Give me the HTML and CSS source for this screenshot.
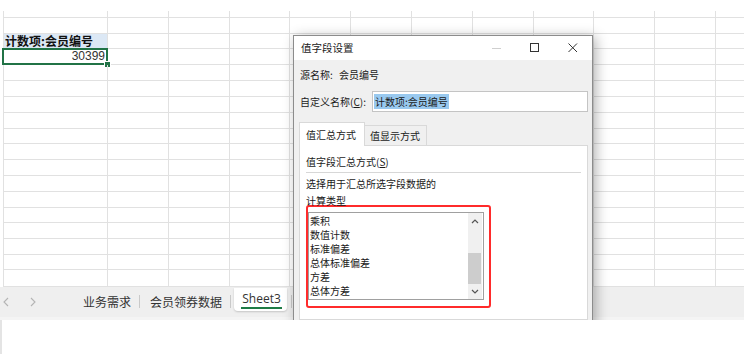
FILE: index.html
```html
<!DOCTYPE html>
<html lang="zh-CN">
<head>
    <meta charset="UTF-8">
    <link rel="stylesheet" href="styles.css">
    <title>值字段设置</title>
</head>
<body>
<div class="screen">
    <div class="sheet">
        <div class="row r7"><span></span><span></span><span></span><span></span><span></span><span></span><span></span><span></span><span></span><span></span><span></span><span></span></div>
        <div class="row"><span></span><span></span><span></span><span></span><span></span><span></span><span></span><span></span><span></span><span></span><span></span><span></span></div>
        <div class="row r15"><span class="head">计数项:会员编号</span><span></span><span></span><span></span><span></span><span></span><span></span><span></span><span></span><span></span><span></span><span></span></div>
        <div class="row"><span class="num">30399<i class="sel"><b class="handle"></b></i></span><span></span><span></span><span></span><span></span><span></span><span></span><span></span><span></span><span></span><span></span><span></span></div>
        <div class="row"><span></span><span></span><span></span><span></span><span></span><span></span><span></span><span></span><span></span><span></span><span></span><span></span></div>
        <div class="row"><span></span><span></span><span></span><span></span><span></span><span></span><span></span><span></span><span></span><span></span><span></span><span></span></div>
        <div class="row"><span></span><span></span><span></span><span></span><span></span><span></span><span></span><span></span><span></span><span></span><span></span><span></span></div>
        <div class="row"><span></span><span></span><span></span><span></span><span></span><span></span><span></span><span></span><span></span><span></span><span></span><span></span></div>
        <div class="row r15"><span></span><span></span><span></span><span></span><span></span><span></span><span></span><span></span><span></span><span></span><span></span><span></span></div>
        <div class="row"><span></span><span></span><span></span><span></span><span></span><span></span><span></span><span></span><span></span><span></span><span></span><span></span></div>
        <div class="row"><span></span><span></span><span></span><span></span><span></span><span></span><span></span><span></span><span></span><span></span><span></span><span></span></div>
        <div class="row"><span></span><span></span><span></span><span></span><span></span><span></span><span></span><span></span><span></span><span></span><span></span><span></span></div>
        <div class="row"><span></span><span></span><span></span><span></span><span></span><span></span><span></span><span></span><span></span><span></span><span></span><span></span></div>
        <div class="row r15"><span></span><span></span><span></span><span></span><span></span><span></span><span></span><span></span><span></span><span></span><span></span><span></span></div>
        <div class="row"><span></span><span></span><span></span><span></span><span></span><span></span><span></span><span></span><span></span><span></span><span></span><span></span></div>
        <div class="row"><span></span><span></span><span></span><span></span><span></span><span></span><span></span><span></span><span></span><span></span><span></span><span></span></div>
        <div class="row r15"><span></span><span></span><span></span><span></span><span></span><span></span><span></span><span></span><span></span><span></span><span></span><span></span></div>
        <div class="row r17"><span></span><span></span><span></span><span></span><span></span><span></span><span></span><span></span><span></span><span></span><span></span><span></span></div>
    </div>

    <div class="tabbar">
        <div class="nav">
            <svg width="8" height="10" viewBox="0 0 8 10"><path d="M6 1 L2 5 L6 9" fill="none" stroke="#b4b4b4" stroke-width="1.1"/></svg>
            <svg width="8" height="10" viewBox="0 0 8 10"><path d="M2 1 L6 5 L2 9" fill="none" stroke="#b4b4b4" stroke-width="1.1"/></svg>
        </div>
        <div class="stab">业务需求</div>
        <span class="sep"></span>
        <div class="stab">会员领券数据</div>
        <span class="sep"></span>
        <div class="stab active"><span>Sheet3</span></div>
        <span class="sep"></span>
    </div>

    <div class="dialog">
        <div class="titlebar">
            <div class="title">值字段设置</div>
            <div class="btn">
                <svg width="10" height="10" viewBox="0 0 10 10"><path d="M0 5.5 H9" stroke="#cfcfcf" stroke-width="1"/></svg>
            </div>
            <div class="btn">
                <svg width="10" height="10" viewBox="0 0 10 10"><rect x="0.5" y="0.5" width="8" height="8" fill="none" stroke="#333" stroke-width="1"/></svg>
            </div>
            <div class="btn">
                <svg width="10" height="10" viewBox="0 0 10 10"><path d="M0.5 0.5 L9 9 M9 0.5 L0.5 9" stroke="#333" stroke-width="1"/></svg>
            </div>
        </div>
        <div class="body">
            <div class="line src"><span class="lbl">源名称:</span>会员编号</div>
            <div class="line custom">
                <span class="lbl">自定义名称(<u>C</u>):</span>
                <div class="input"><span class="picked">计数项:会员编号</span></div>
            </div>
            <div class="tabs">
                <div class="tab on">值汇总方式</div>
                <div class="tab">值显示方式</div>
            </div>
            <div class="panel">
                <div class="caption">值字段汇总方式(<u>S</u>)</div>
                <div class="rule"></div>
                <p class="hint">选择用于汇总所选字段数据的<br>计算类型</p>
                <div class="mark">
                    <div class="list">
                        <ul class="items">
                            <li>乘积</li>
                            <li>数值计数</li>
                            <li>标准偏差</li>
                            <li>总体标准偏差</li>
                            <li>方差</li>
                            <li>总体方差</li>
                        </ul>
                        <div class="scroll">
                            <div class="arrow up">
                                <svg width="8" height="5" viewBox="0 0 8 5"><path d="M1 4 L4 1 L7 4" fill="none" stroke="#555" stroke-width="1.2"/></svg>
                            </div>
                            <div class="track"><div class="thumb"></div></div>
                            <div class="arrow down">
                                <svg width="8" height="5" viewBox="0 0 8 5"><path d="M1 1 L4 4 L7 1" fill="none" stroke="#555" stroke-width="1.2"/></svg>
                            </div>
                        </div>
                    </div>
                </div>
            </div>
        </div>
    </div>
</div>
<div class="below"></div>
</body>
</html>
```

FILE: styles.css
```css
*{
    margin: 0;
    padding: 0;
    box-sizing: border-box;
}
body{
    background-color: #ffffff;
    font-family: "Noto Sans CJK SC", "Liberation Sans", sans-serif;
    width: 744px;
    height: 354px;
    overflow: hidden;
}

.screen{
    position: relative;
    height: 320px;
    overflow: hidden;
}
.below{
    height: 34px;
    border-left: 2px solid #e4e4e4;
}

/* grid */
.sheet{
    padding-top: 11px;
    padding-left: 3px;
    height: 287px;
    overflow: hidden;
}
.row{
    display: grid;
    grid-template-columns: 104px repeat(11, 60.8px);
    height: 16px;
    border-left: 1px solid #e1e1e1;
    border-bottom: 1px solid #e1e1e1;
}
.r7{ height: 7px; }
.r15{ height: 15px; }
.r17{ height: 17px; }
.row span{
    border-right: 1px solid #e1e1e1;
    position: relative;
}
.row .head{
    background-color: #dce8f5;
    font-size: 12px;
    font-weight: bold;
    line-height: 14px;
    padding-left: 1px;
    color: #111;
    white-space: nowrap;
}
.row .num{
    font-family: "Liberation Sans", sans-serif;
    font-size: 12px;
    line-height: 15px;
    text-align: right;
    padding-right: 2px;
    color: #333;
}
.sel{
    position: absolute;
    top: -1px;
    left: -2px;
    right: -1px;
    bottom: -1px;
    border: 2px solid #217346;
}
.handle{
    position: absolute;
    right: -4px;
    bottom: -4px;
    width: 5px;
    height: 5px;
    background-color: #217346;
    outline: 1px solid #fff;
}

/* sheet tabs */
.tabbar{
    display: flex;
    align-items: flex-start;
    height: 33px;
    background-color: #efefef;
    border-bottom: 3px solid #f4f4f4;
    font-size: 12px;
    color: #333;
}
.nav{
    display: flex;
    gap: 19px;
    width: 83px;
    padding-left: 2px;
    margin-top: 10px;
}
.stab{
    margin-top: 7px;
    line-height: 16px;
    white-space: nowrap;
}
.sep{
    width: 1px;
    height: 13px;
    margin: 8px 10px 0 8px;
    background-color: #c9c9c9;
}
.stab.active{
    margin: 1px 0 0 -7px;
    width: 53px;
    height: 23px;
    background-color: #fff;
    border-radius: 0 0 4px 4px;
    box-shadow: 0 1px 2px rgba(0, 0, 0, 0.18);
    font-family: "Open Sans", "Noto Sans", sans-serif;
}
.stab.active span{
    display: block;
    margin: 0 5px 0 7px;
    padding-top: 2px;
    line-height: 17px;
    text-align: center;
    border-bottom: 2px solid #1e7b45;
}
.stab.active + .sep{
    margin-left: 4px;
}

/* dialog window */
.dialog{
    position: absolute;
    left: 293px;
    top: 35px;
    width: 300px;
    height: 320px;
    background-color: #f0f0f0;
    border: 1px solid #8c8c8c;
    box-shadow: 3px 2px 12px rgba(0, 0, 0, 0.3);
    font-size: 10px;
    color: #1a1a1a;
}
.titlebar{
    display: flex;
    align-items: center;
    height: 24px;
    background-color: #fff;
}
.title{
    flex: 1;
    padding-left: 7px;
    font-size: 10.5px;
    line-height: 14px;
}
.btn{
    display: flex;
    align-items: center;
    justify-content: center;
    width: 38px;
    height: 24px;
}
.body{
    padding: 8px 4px 0 5px;
}
.line{
    display: flex;
    align-items: center;
    padding-left: 1px;
    line-height: 14px;
}
.src .lbl{
    width: 39px;
}
.custom{
    margin-top: 9px;
}
.custom .lbl{
    width: 72px;
}
.input{
    width: 216px;
    height: 21px;
    margin-right: -1px;
    border: 1px solid #c4c4c4;
    background-color: #fff;
    padding: 2px 0 0 1px;
}
.picked{
    display: inline-block;
    background-color: #99c9ef;
    line-height: 15px;
    padding: 0 1px;
}

.tabs{
    display: flex;
    align-items: flex-end;
    margin-top: 10px;
    height: 23px;
}
.tab{
    width: 62px;
    height: 20px;
    padding: 3px 0 0 5px;
    line-height: 14px;
    border: 1px solid #d9d9d9;
    border-left: none;
    border-bottom: none;
    background-color: #f0f0f0;
}
.tab.on{
    width: 66px;
    height: 24px;
    margin-bottom: -1px;
    padding: 5px 0 0 6px;
    border-left: 1px solid #d9d9d9;
    background-color: #fff;
    position: relative;
}
.panel{
    height: 175px;
    background-color: #fff;
    border: 1px solid #d9d9d9;
    padding: 9px 6px 0 6px;
}
.caption{
    line-height: 14px;
}
.rule{
    margin-top: 3px;
    border-top: 1px solid #d7d7d7;
}
.hint{
    margin-top: 2px;
    line-height: 17px;
}
.mark{
    width: 185px;
    margin-top: -4px;
    padding: 5px 5px 6px 0;
    border: 2px solid #ff2b2b;
    border-radius: 3px;
}
.list{
    display: flex;
    height: 88px;
    border: 1px solid #a0a0a0;
    background-color: #fff;
}
.items{
    flex: 1;
    list-style: none;
    padding: 1px 0 0 1px;
    line-height: 14.1px;
    overflow: hidden;
}
.scroll{
    display: flex;
    flex-direction: column;
    width: 14px;
    margin-right: 1px;
    background-color: #f0f0f0;
}
.arrow{
    display: flex;
    align-items: center;
    justify-content: center;
}
.arrow.up{
    height: 16px;
}
.arrow.down{
    height: 15px;
}
.track{
    flex: 1;
    display: flex;
    flex-direction: column;
    justify-content: flex-end;
}
.thumb{
    height: 31px;
    margin: 0 1px 0 0;
    background-color: #cdcdcd;
}
```
